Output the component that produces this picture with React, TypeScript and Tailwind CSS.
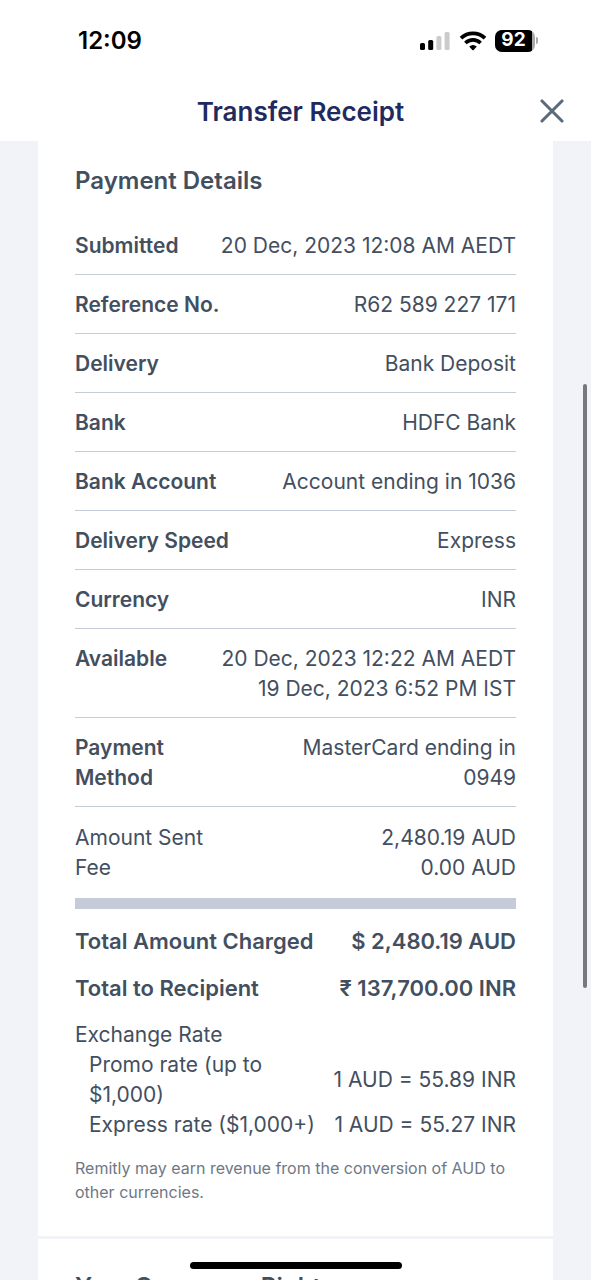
import { type ReactNode } from "react";

const details: { label: string; lines: string[] }[] = [
  { label: "Submitted", lines: ["20 Dec, 2023 12:08 AM AEDT"] },
  { label: "Reference No.", lines: ["R62 589 227 171"] },
  { label: "Delivery", lines: ["Bank Deposit"] },
  { label: "Bank", lines: ["HDFC Bank"] },
  { label: "Bank Account", lines: ["Account ending in 1036"] },
  { label: "Delivery Speed", lines: ["Express"] },
  { label: "Currency", lines: ["INR"] },
  { label: "Available", lines: ["20 Dec, 2023 12:22 AM AEDT", "19 Dec, 2023 6:52 PM IST"] },
  { label: "Payment Method", lines: ["MasterCard ending in 0949"] },
];

function StatusBar() {
  return (
    <div className="flex h-[81px] items-center justify-between pr-[53px] pl-[78px]">
      <time className="text-[24px] font-semibold text-black">12:09</time>
      <div className="flex items-center">
        <svg className="h-5 w-8" viewBox="0 0 32 20" aria-hidden="true">
          <rect x="1" y="12" width="5" height="7" rx="1.6" fill="#000" />
          <rect x="9.2" y="9" width="5" height="10" rx="1.6" fill="#000" />
          <rect x="17.4" y="5" width="5" height="14" rx="1.6" fill="#cbcbcb" />
          <rect x="25.6" y="1" width="5" height="18" rx="1.6" fill="#cbcbcb" />
        </svg>
        <svg className="ml-2 h-5 w-7" viewBox="0 0 28 20" aria-hidden="true">
          <g fill="none" stroke="#000" strokeWidth="3.7">
            <path d="M2 7.2A17.2 17.2 0 0 1 26 7.2" />
            <path d="M6.4 12A11 11 0 0 1 21.6 12" />
          </g>
          <path d="M10.2 15.6A6 6 0 0 1 17.8 15.6L14.7 18.9Q14 19.5 13.3 18.9Z" fill="#000" />
        </svg>
        <div className="ml-2 flex items-center">
          <div className="flex h-[22px] w-10 overflow-hidden rounded-[7px] bg-[#a9a9a9]">
            <span className="flex w-[37px] items-center justify-center bg-black text-[19px] font-bold text-white">
              92
            </span>
          </div>
          <span className="ml-px h-[7px] w-[2px] rounded-r-full bg-[#a9a9a9]" />
        </div>
      </div>
    </div>
  );
}

function Row({ label, children, className = "" }: { label: string; children: ReactNode; className?: string }) {
  return (
    <div className={`flex justify-between gap-4 ${className}`}>
      <dt>{label}</dt>
      <dd className="text-right">{children}</dd>
    </div>
  );
}

export default function App() {
  return (
    <div className="relative flex h-screen flex-col overflow-hidden bg-[#f2f3f8] font-['Inter','Liberation_Sans',sans-serif] text-[#434f5f]">
      <header className="shrink-0 bg-white">
        <StatusBar />
        <div className="grid h-[60px] grid-cols-[1fr_auto_1fr] items-center pr-[23px] pl-[33px]">
          <h1 className="col-start-2 text-[26px] font-semibold text-[#1f2b60]">Transfer Receipt</h1>
          <button type="button" aria-label="Close" className="justify-self-end p-1">
            <svg className="size-6" viewBox="0 0 24 24" fill="none" stroke="#5b6b7b" strokeWidth="3.1" strokeLinecap="round" aria-hidden="true">
              <path d="M2 2 22 22M22 2 2 22" />
            </svg>
          </button>
        </div>
      </header>

      <main className="mx-[38px] min-h-0 flex-1 overflow-hidden text-[21px] leading-[30px]">
        <section className="bg-white px-[37px] pt-6 pb-8">
          <h2 className="pb-[19px] text-[24px] leading-8 font-semibold">Payment Details</h2>
          <dl>
            {details.map((item) => (
              <Row key={item.label} label={item.label} className="border-b border-[#c5cbd8] pt-[15px] pb-[13px] [&>dt]:font-semibold">
                {item.lines.map((line) => (
                  <span key={line} className="block">
                    {line}
                  </span>
                ))}
              </Row>
            ))}
          </dl>
          <dl className="border-b-[11px] border-[#c5cbd8] pt-4 pb-[15px]">
            <Row label="Amount Sent">2,480.19 AUD</Row>
            <Row label="Fee">0.00 AUD</Row>
          </dl>
          <dl className="flex flex-col gap-[17px] py-[17px] text-[22px] font-semibold">
            <Row label="Total Amount Charged">$ 2,480.19 AUD</Row>
            <Row label="Total to Recipient">₹ 137,700.00 INR</Row>
          </dl>
          <h3>Exchange Rate</h3>
          <dl className="pl-[14px] [&_dd]:whitespace-nowrap">
            <Row label="Promo rate (up to $1,000)" className="items-center">1 AUD = 55.89 INR</Row>
            <Row label="Express rate ($1,000+)">1 AUD = 55.27 INR</Row>
          </dl>
          <p className="pt-4 text-[16px] leading-6 text-[#6e7885]">
            Remitly may earn revenue from the conversion of AUD to other currencies.
          </p>
        </section>
        <section className="border-t-[3px] border-[#f2f3f8] bg-white px-[37px] py-8">
          <h2 className="text-[24px] leading-8 font-semibold">Your Consumer Rights</h2>
        </section>
      </main>

      <div className="absolute top-[30%] right-1 h-[604px] w-1 rounded-full bg-[#77787b]" />
      <div className="absolute bottom-[11px] left-1/2 h-[7px] w-[212px] -translate-x-1/2 rounded-full bg-black" />
    </div>
  );
}
